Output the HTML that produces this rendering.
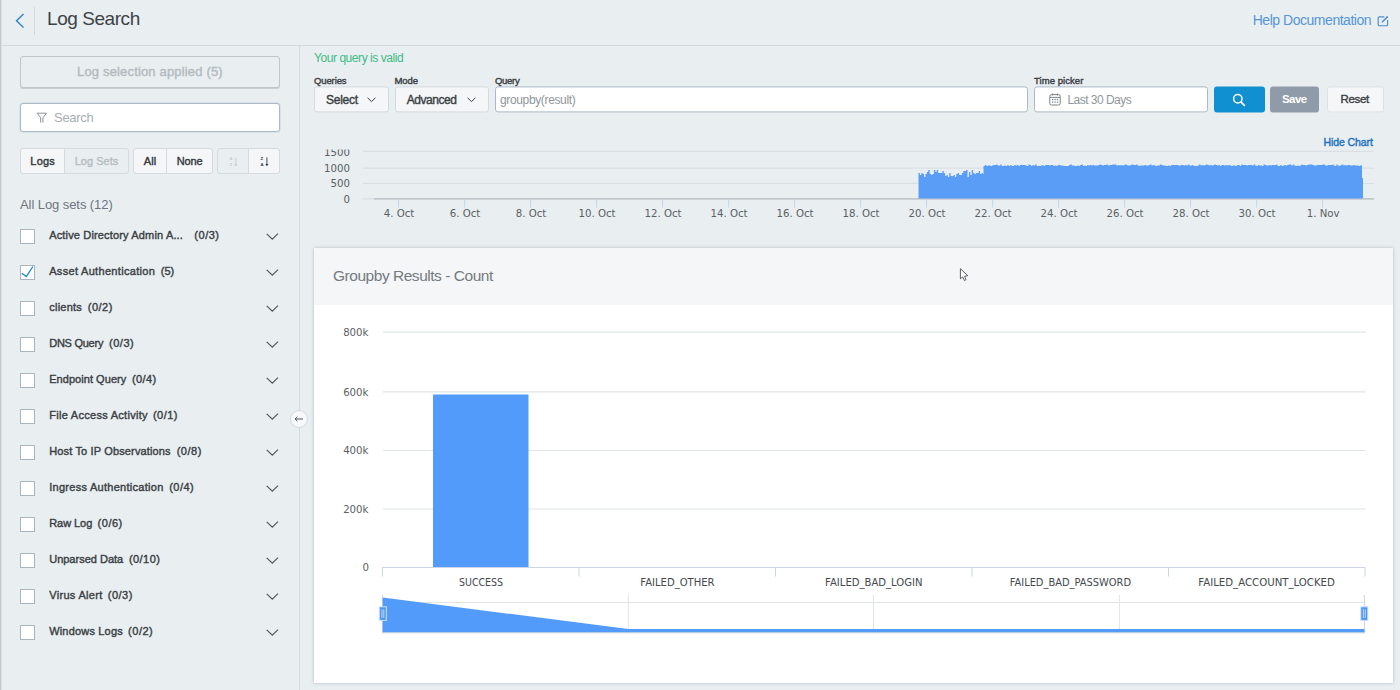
<!DOCTYPE html>
<html><head><meta charset="utf-8"><title>Log Search</title>
<style>
*{box-sizing:border-box;margin:0;padding:0}
html,body{width:1400px;height:690px;overflow:hidden}
body{background:#e9eef1;font-family:"Liberation Sans",sans-serif;color:#30353a;position:relative}
.abs{position:absolute}
.t{position:absolute;white-space:nowrap}
#edge{left:0;top:0;width:1px;height:690px;background:#c3c8cc;box-shadow:1px 0 0 #dde2e5}
#hdr{left:2px;top:0;width:1398px;height:46px;border-bottom:1px solid #d3d9dd}
#hdiv{left:34px;top:7px;width:1px;height:28px;background:#d3d9dd}
#side{left:2px;top:46px;width:298px;height:644px;border-right:1px solid #d3d9dd}
#applied{left:20px;top:56px;width:260px;height:32px;border:1px solid #bfc6cb;border-radius:3px;background:#e9eef1;box-shadow:0 1px 0 #c9ced2}
#search{left:20px;top:103px;width:260px;height:29px;border:1px solid #adbbc6;border-radius:3px;background:#fff;box-shadow:0 0 0 .5px #cdd6dc}
.btn{position:absolute;top:148px;height:26px;border:1px solid #d5dadd;background:#f4f6f7}
.btn.dis{background:#e9eef1}
.cb{position:absolute;left:20px;width:15px;height:15px;border:1px solid #aab5bf;background:#fff;border-radius:.5px}
.dd{transform:translateY(-.6px);position:absolute;top:87px;height:26px;border:1px solid #d5dadd;border-radius:3px;background:#f4f6f7}
.inp{transform:translateY(-.6px);position:absolute;top:87px;height:26px;border:1px solid #a9b9c5;border-radius:3px;background:#fff}
.b2{transform:translateY(-.6px);position:absolute;top:87px;height:26px;border-radius:3px}
#panel{left:314px;top:248px;width:1079px;height:435px;background:#fff;box-shadow:0 0 3px rgba(120,135,145,.5)}
#phead{left:314px;top:248px;width:1079px;height:57px;background:#f4f6f8}
#collapse{left:290px;top:410px;width:18px;height:18px;border-radius:9px;background:#f6f8f9;border:1px solid #d3d9dd}
</style></head><body>
<div id="edge" class="abs"></div><div id="hdr" class="abs"></div>
<svg class="abs" style="left:14px;top:12px" width="12" height="18" viewBox="0 0 12 18"><path d="M9.5 2 L2.5 8.7 L9.5 15.4" fill="none" stroke="#2b82cf" stroke-width="1.4"/></svg>
<div id="hdiv" class="abs"></div>
<svg class="abs" style="left:1377px;top:15px" width="12" height="12" viewBox="0 0 12 12"><path d="M7.3 1.9H2.5a1.3 1.3 0 0 0-1.3 1.3v6.2a1.3 1.3 0 0 0 1.3 1.3h6.8a1.3 1.3 0 0 0 1.3-1.3V5" fill="none" stroke="#4a8fd0" stroke-width="1.15"/><path d="M5 7.3L10.3 2" fill="none" stroke="#3f86cc" stroke-width="1.3"/><circle cx="10.3" cy="2" r=".8" fill="#2f78c4"/></svg>
<div id="side" class="abs"></div><div id="applied" class="abs"></div><div id="search" class="abs"></div>
<svg class="abs" style="left:36px;top:112px" width="12" height="12" viewBox="0 0 12 12"><path d="M1 1.2h9.6L6.9 5.6v5M4.7 10.6v-5L1 1.2" fill="none" stroke="#8a9298" stroke-width="1"/></svg>
<div class="btn" style="left:20px;width:45px;border-radius:3px 0 0 3px"></div>
<div class="btn dis" style="left:64px;width:65px;border-radius:0 3px 3px 0"></div>
<div class="btn" style="left:133px;width:34px;border-radius:3px 0 0 3px"></div>
<div class="btn" style="left:166px;width:47px;border-radius:0 3px 3px 0"></div>
<div class="btn dis" style="left:217px;width:32px;border-radius:3px 0 0 3px"></div>
<div class="btn" style="left:248px;width:32px;border-radius:0 3px 3px 0"></div>
<svg class="abs" style="left:228.6px;top:156px" width="12" height="12" viewBox="0 0 12 12"><text x="0.5" y="4.4" font-size="4.3" font-weight="bold" fill="#c3c9ce" font-family="Liberation Sans">A</text><text x="0.6" y="10.2" font-size="4.3" font-weight="bold" fill="#c3c9ce" font-family="Liberation Sans">Z</text><path d="M6.9 1.6v8.2M5.6 8.2l1.3 1.6 1.3-1.6" fill="none" stroke="#c3c9ce" stroke-width=".9"/></svg>
<svg class="abs" style="left:259.6px;top:156px" width="12" height="12" viewBox="0 0 12 12"><text x="0.6" y="4.4" font-size="4.3" font-weight="bold" fill="#3a3f44" font-family="Liberation Sans">Z</text><text x="0.5" y="10.2" font-size="4.3" font-weight="bold" fill="#3a3f44" font-family="Liberation Sans">A</text><path d="M6.9 1.4v7.6" fill="none" stroke="#4a4f54" stroke-width="1"/><path d="M5.3 7.9h3.2L6.9 10.3Z" fill="#3a3f44"/></svg>
<div class="cb" style="top:229px"></div><svg class="abs" style="left:265px;top:233px" width="14" height="8" viewBox="0 0 14 8"><path d="M1.7 0.8L7.3 6.1L13 0.7" fill="none" stroke="#50555a" stroke-width="1.15"/></svg>
<div class="cb" style="top:265px"><svg style="position:absolute;left:0;top:0" width="13" height="13" viewBox="0 0 13 13"><path d="M0.8 7.2L5.3 10.5L11.9 0.5" fill="none" stroke="#1b8acb" stroke-width="1.35"/></svg></div><svg class="abs" style="left:265px;top:269px" width="14" height="8" viewBox="0 0 14 8"><path d="M1.7 0.8L7.3 6.1L13 0.7" fill="none" stroke="#50555a" stroke-width="1.15"/></svg>
<div class="cb" style="top:301px"></div><svg class="abs" style="left:265px;top:305px" width="14" height="8" viewBox="0 0 14 8"><path d="M1.7 0.8L7.3 6.1L13 0.7" fill="none" stroke="#50555a" stroke-width="1.15"/></svg>
<div class="cb" style="top:337px"></div><svg class="abs" style="left:265px;top:341px" width="14" height="8" viewBox="0 0 14 8"><path d="M1.7 0.8L7.3 6.1L13 0.7" fill="none" stroke="#50555a" stroke-width="1.15"/></svg>
<div class="cb" style="top:373px"></div><svg class="abs" style="left:265px;top:377px" width="14" height="8" viewBox="0 0 14 8"><path d="M1.7 0.8L7.3 6.1L13 0.7" fill="none" stroke="#50555a" stroke-width="1.15"/></svg>
<div class="cb" style="top:409px"></div><svg class="abs" style="left:265px;top:413px" width="14" height="8" viewBox="0 0 14 8"><path d="M1.7 0.8L7.3 6.1L13 0.7" fill="none" stroke="#50555a" stroke-width="1.15"/></svg>
<div class="cb" style="top:445px"></div><svg class="abs" style="left:265px;top:449px" width="14" height="8" viewBox="0 0 14 8"><path d="M1.7 0.8L7.3 6.1L13 0.7" fill="none" stroke="#50555a" stroke-width="1.15"/></svg>
<div class="cb" style="top:481px"></div><svg class="abs" style="left:265px;top:485px" width="14" height="8" viewBox="0 0 14 8"><path d="M1.7 0.8L7.3 6.1L13 0.7" fill="none" stroke="#50555a" stroke-width="1.15"/></svg>
<div class="cb" style="top:517px"></div><svg class="abs" style="left:265px;top:521px" width="14" height="8" viewBox="0 0 14 8"><path d="M1.7 0.8L7.3 6.1L13 0.7" fill="none" stroke="#50555a" stroke-width="1.15"/></svg>
<div class="cb" style="top:553px"></div><svg class="abs" style="left:265px;top:557px" width="14" height="8" viewBox="0 0 14 8"><path d="M1.7 0.8L7.3 6.1L13 0.7" fill="none" stroke="#50555a" stroke-width="1.15"/></svg>
<div class="cb" style="top:589px"></div><svg class="abs" style="left:265px;top:593px" width="14" height="8" viewBox="0 0 14 8"><path d="M1.7 0.8L7.3 6.1L13 0.7" fill="none" stroke="#50555a" stroke-width="1.15"/></svg>
<div class="cb" style="top:625px"></div><svg class="abs" style="left:265px;top:629px" width="14" height="8" viewBox="0 0 14 8"><path d="M1.7 0.8L7.3 6.1L13 0.7" fill="none" stroke="#50555a" stroke-width="1.15"/></svg>
<div class="dd" style="left:314px;width:75px"></div>
<svg class="abs" style="left:367px;top:97px" width="9" height="6" viewBox="0 0 9 6"><path d="M.6.8L4.5 4.6L8.4.8" fill="none" stroke="#3a3f44" stroke-width="1"/></svg>
<div class="dd" style="left:395px;width:94px"></div>
<svg class="abs" style="left:467px;top:97px" width="9" height="6" viewBox="0 0 9 6"><path d="M.6.8L4.5 4.6L8.4.8" fill="none" stroke="#3a3f44" stroke-width="1"/></svg>
<div class="inp" style="left:495px;width:533px"></div>
<div class="inp" style="left:1034px;width:174px"></div>
<svg class="abs" style="left:1049px;top:93px" width="12" height="13" viewBox="0 0 12 13"><rect x=".8" y="1.6" width="10.4" height="10.4" rx="1.6" fill="none" stroke="#7d858b" stroke-width="1"/><path d="M3.4 0.4v2.2M8.6 0.4v2.2M1 4.4h10" stroke="#7d858b" stroke-width="1" fill="none"/><path d="M3 6.7h1.3M5.4 6.7h1.3M7.8 6.7h1.3M3 9.1h1.3M5.4 9.1h1.3M7.8 9.1h1.3" stroke="#7d858b" stroke-width="1.2"/></svg>
<div class="b2" style="left:1214px;width:51px;background:#108fd1"></div>
<svg class="abs" style="left:1232px;top:93px" width="14" height="14" viewBox="0 0 14 14"><circle cx="5.8" cy="5.8" r="4.2" fill="none" stroke="#fff" stroke-width="1.5"/><path d="M8.9 8.9L12.8 12.8" stroke="#fff" stroke-width="1.7"/></svg>
<div class="b2" style="left:1270px;width:49px;background:#8f9ba8"></div>
<div class="b2" style="left:1327px;width:57px;background:#f4f6f7;border:1px solid #dde1e4"></div>
<svg class="abs" style="left:300px;top:140px" width="1100" height="90" viewBox="300 140 1100 90" font-family="'DejaVu Sans','Liberation Sans',sans-serif">
<path d="M363 151.3H1374" stroke="#d6dce1" stroke-width="1"/>
<path d="M363 168.1H1374" stroke="#d6dce1" stroke-width="1"/>
<path d="M363 183.4H1374" stroke="#d6dce1" stroke-width="1"/>
<path d="M363 198.9H1374" stroke="#d6dce1" stroke-width="1"/>
<path d="M374 198.9H1374" stroke="#b9bec3" stroke-width="1.2"/>
<clipPath id="c1"><rect x="300" y="149.4" width="1100" height="90"/></clipPath>
<text x="350" y="155.8" text-anchor="end" font-size="10.2" fill="#5a5f64" clip-path="url(#c1)">1500</text>
<text x="350" y="171.5" text-anchor="end" font-size="10.2" fill="#5a5f64" clip-path="url(#c1)">1000</text>
<text x="350" y="187" text-anchor="end" font-size="10.2" fill="#5a5f64" clip-path="url(#c1)">500</text>
<text x="350" y="202.5" text-anchor="end" font-size="10.2" fill="#5a5f64" clip-path="url(#c1)">0</text>
<path d="M398.6 199.5V207.5" stroke="#c3d3ea" stroke-width="1"/>
<text x="399.1" y="217" text-anchor="middle" font-size="10.2" fill="#5a5f64">4. Oct</text>
<path d="M464.6 199.5V207.5" stroke="#c3d3ea" stroke-width="1"/>
<text x="465.1" y="217" text-anchor="middle" font-size="10.2" fill="#5a5f64">6. Oct</text>
<path d="M530.6 199.5V207.5" stroke="#c3d3ea" stroke-width="1"/>
<text x="531.1" y="217" text-anchor="middle" font-size="10.2" fill="#5a5f64">8. Oct</text>
<path d="M596.6 199.5V207.5" stroke="#c3d3ea" stroke-width="1"/>
<text x="597.1" y="217" text-anchor="middle" font-size="10.2" fill="#5a5f64">10. Oct</text>
<path d="M662.6 199.5V207.5" stroke="#c3d3ea" stroke-width="1"/>
<text x="663.1" y="217" text-anchor="middle" font-size="10.2" fill="#5a5f64">12. Oct</text>
<path d="M728.6 199.5V207.5" stroke="#c3d3ea" stroke-width="1"/>
<text x="729.1" y="217" text-anchor="middle" font-size="10.2" fill="#5a5f64">14. Oct</text>
<path d="M794.6 199.5V207.5" stroke="#c3d3ea" stroke-width="1"/>
<text x="795.1" y="217" text-anchor="middle" font-size="10.2" fill="#5a5f64">16. Oct</text>
<path d="M860.6 199.5V207.5" stroke="#c3d3ea" stroke-width="1"/>
<text x="861.1" y="217" text-anchor="middle" font-size="10.2" fill="#5a5f64">18. Oct</text>
<path d="M926.6 199.5V207.5" stroke="#c3d3ea" stroke-width="1"/>
<text x="927.1" y="217" text-anchor="middle" font-size="10.2" fill="#5a5f64">20. Oct</text>
<path d="M992.6 199.5V207.5" stroke="#c3d3ea" stroke-width="1"/>
<text x="993.1" y="217" text-anchor="middle" font-size="10.2" fill="#5a5f64">22. Oct</text>
<path d="M1058.6 199.5V207.5" stroke="#c3d3ea" stroke-width="1"/>
<text x="1059.1" y="217" text-anchor="middle" font-size="10.2" fill="#5a5f64">24. Oct</text>
<path d="M1124.6 199.5V207.5" stroke="#c3d3ea" stroke-width="1"/>
<text x="1125.1" y="217" text-anchor="middle" font-size="10.2" fill="#5a5f64">26. Oct</text>
<path d="M1190.6 199.5V207.5" stroke="#c3d3ea" stroke-width="1"/>
<text x="1191.1" y="217" text-anchor="middle" font-size="10.2" fill="#5a5f64">28. Oct</text>
<path d="M1256.6 199.5V207.5" stroke="#c3d3ea" stroke-width="1"/>
<text x="1257.1" y="217" text-anchor="middle" font-size="10.2" fill="#5a5f64">30. Oct</text>
<path d="M1322.6 199.5V207.5" stroke="#c3d3ea" stroke-width="1"/>
<text x="1323.1" y="217" text-anchor="middle" font-size="10.2" fill="#5a5f64">1. Nov</text>
<path d="M918.5 198.5 L918.5 173 L919.9 173 L919.9 175 L921.3 175 L921.3 173 L922.7 173 L922.7 174 L924.1 174 L924.1 177 L925.5 177 L925.5 174 L926.9 174 L926.9 172 L928.3 172 L928.3 170 L929.7 170 L929.7 174 L931.1 174 L931.1 175 L932.5 175 L932.5 174 L933.9 174 L933.9 170 L935.3 170 L935.3 172 L936.7 172 L936.7 170 L938.1 170 L938.1 173 L939.5 173 L939.5 173 L940.9 173 L940.9 173 L942.3 173 L942.3 171 L943.7 171 L943.7 173 L945.1 173 L945.1 176 L946.5 176 L946.5 175 L947.9 175 L947.9 177 L949.3 177 L949.3 173 L950.7 173 L950.7 176 L952.1 176 L952.1 176 L953.5 176 L953.5 175 L954.9 175 L954.9 177 L956.3 177 L956.3 174 L957.7 174 L957.7 173 L959.1 173 L959.1 175 L960.5 175 L960.5 175 L961.9 175 L961.9 173 L963.3 173 L963.3 171 L964.7 171 L964.7 171 L966.1 171 L966.1 170 L967.5 170 L967.5 177 L968.9 177 L968.9 172 L970.3 172 L970.3 175 L971.7 175 L971.7 170 L973.1 170 L973.1 173 L974.5 173 L974.5 174 L975.9 174 L975.9 173 L977.3 173 L977.3 173 L978.7 173 L978.7 171 L980.1 171 L980.1 174 L981.5 174 L981.5 173 L982.9 173 L982.9 174 L983.5 174 L983.5 166 L984.9 166 L984.9 165 L986.3 165 L986.3 166 L987.7 166 L987.7 165.5 L989.1 165.5 L989.1 165.5 L990.5 165.5 L990.5 166 L991.9 166 L991.9 165.5 L993.3 165.5 L993.3 165 L994.7 165 L994.7 165 L996.1 165 L996.1 164.5 L997.5 164.5 L997.5 165.5 L998.9 165.5 L998.9 165.5 L1000.3 165.5 L1000.3 164.5 L1001.7 164.5 L1001.7 166 L1003.1 166 L1003.1 166 L1004.5 166 L1004.5 165.5 L1005.9 165.5 L1005.9 166 L1007.3 166 L1007.3 165 L1008.7 165 L1008.7 166 L1010.1 166 L1010.1 165 L1011.5 165 L1011.5 166 L1012.9 166 L1012.9 166 L1014.3 166 L1014.3 165 L1015.7 165 L1015.7 165.5 L1017.1 165.5 L1017.1 165 L1018.5 165 L1018.5 166 L1019.9 166 L1019.9 165 L1021.3 165 L1021.3 165 L1022.7 165 L1022.7 165 L1024.1 165 L1024.1 165 L1025.5 165 L1025.5 165.5 L1026.9 165.5 L1026.9 166 L1028.3 166 L1028.3 164.5 L1029.7 164.5 L1029.7 165 L1031.1 165 L1031.1 166 L1032.5 166 L1032.5 165 L1033.9 165 L1033.9 165.5 L1035.3 165.5 L1035.3 164.5 L1036.7 164.5 L1036.7 166 L1038.1 166 L1038.1 166 L1039.5 166 L1039.5 166 L1040.9 166 L1040.9 165.5 L1042.3 165.5 L1042.3 165 L1043.7 165 L1043.7 166 L1045.1 166 L1045.1 165 L1046.5 165 L1046.5 165 L1047.9 165 L1047.9 165 L1049.3 165 L1049.3 165.5 L1050.7 165.5 L1050.7 165 L1052.1 165 L1052.1 165 L1053.5 165 L1053.5 166 L1054.9 166 L1054.9 165.5 L1056.3 165.5 L1056.3 166 L1057.7 166 L1057.7 165 L1059.1 165 L1059.1 165 L1060.5 165 L1060.5 165.5 L1061.9 165.5 L1061.9 165.5 L1063.3 165.5 L1063.3 166 L1064.7 166 L1064.7 166 L1066.1 166 L1066.1 166 L1067.5 166 L1067.5 166 L1068.9 166 L1068.9 165 L1070.3 165 L1070.3 164.5 L1071.7 164.5 L1071.7 165.5 L1073.1 165.5 L1073.1 165.5 L1074.5 165.5 L1074.5 166 L1075.9 166 L1075.9 166 L1077.3 166 L1077.3 165.5 L1078.7 165.5 L1078.7 166 L1080.1 166 L1080.1 165 L1081.5 165 L1081.5 164.5 L1082.9 164.5 L1082.9 166 L1084.3 166 L1084.3 165.5 L1085.7 165.5 L1085.7 166 L1087.1 166 L1087.1 165 L1088.5 165 L1088.5 165.5 L1089.9 165.5 L1089.9 165 L1091.3 165 L1091.3 165.5 L1092.7 165.5 L1092.7 165 L1094.1 165 L1094.1 165.5 L1095.5 165.5 L1095.5 165.5 L1096.9 165.5 L1096.9 165.5 L1098.3 165.5 L1098.3 165 L1099.7 165 L1099.7 164.5 L1101.1 164.5 L1101.1 165 L1102.5 165 L1102.5 165.5 L1103.9 165.5 L1103.9 165 L1105.3 165 L1105.3 165 L1106.7 165 L1106.7 164.5 L1108.1 164.5 L1108.1 165.5 L1109.5 165.5 L1109.5 165 L1110.9 165 L1110.9 165 L1112.3 165 L1112.3 164.5 L1113.7 164.5 L1113.7 164.5 L1115.1 164.5 L1115.1 164.5 L1116.5 164.5 L1116.5 165.5 L1117.9 165.5 L1117.9 165 L1119.3 165 L1119.3 165.5 L1120.7 165.5 L1120.7 165 L1122.1 165 L1122.1 165.5 L1123.5 165.5 L1123.5 165 L1124.9 165 L1124.9 164.5 L1126.3 164.5 L1126.3 165 L1127.7 165 L1127.7 165.5 L1129.1 165.5 L1129.1 165.5 L1130.5 165.5 L1130.5 165 L1131.9 165 L1131.9 164.5 L1133.3 164.5 L1133.3 165 L1134.7 165 L1134.7 165 L1136.1 165 L1136.1 164.5 L1137.5 164.5 L1137.5 165.5 L1138.9 165.5 L1138.9 166 L1140.3 166 L1140.3 165.5 L1141.7 165.5 L1141.7 165.5 L1143.1 165.5 L1143.1 165.5 L1144.5 165.5 L1144.5 165 L1145.9 165 L1145.9 165.5 L1147.3 165.5 L1147.3 165.5 L1148.7 165.5 L1148.7 165 L1150.1 165 L1150.1 164.5 L1151.5 164.5 L1151.5 165.5 L1152.9 165.5 L1152.9 165 L1154.3 165 L1154.3 165.5 L1155.7 165.5 L1155.7 166 L1157.1 166 L1157.1 165.5 L1158.5 165.5 L1158.5 165.5 L1159.9 165.5 L1159.9 164.5 L1161.3 164.5 L1161.3 165 L1162.7 165 L1162.7 165.5 L1164.1 165.5 L1164.1 165.5 L1165.5 165.5 L1165.5 166 L1166.9 166 L1166.9 166 L1168.3 166 L1168.3 165.5 L1169.7 165.5 L1169.7 166 L1171.1 166 L1171.1 165 L1172.5 165 L1172.5 165 L1173.9 165 L1173.9 165 L1175.3 165 L1175.3 165 L1176.7 165 L1176.7 165 L1178.1 165 L1178.1 165.5 L1179.5 165.5 L1179.5 165.5 L1180.9 165.5 L1180.9 165 L1182.3 165 L1182.3 165 L1183.7 165 L1183.7 165.5 L1185.1 165.5 L1185.1 165 L1186.5 165 L1186.5 165.5 L1187.9 165.5 L1187.9 164.5 L1189.3 164.5 L1189.3 165.5 L1190.7 165.5 L1190.7 165.5 L1192.1 165.5 L1192.1 165 L1193.5 165 L1193.5 166 L1194.9 166 L1194.9 166 L1196.3 166 L1196.3 166 L1197.7 166 L1197.7 165.5 L1199.1 165.5 L1199.1 164.5 L1200.5 164.5 L1200.5 165.5 L1201.9 165.5 L1201.9 165 L1203.3 165 L1203.3 165.5 L1204.7 165.5 L1204.7 165 L1206.1 165 L1206.1 164.5 L1207.5 164.5 L1207.5 165 L1208.9 165 L1208.9 165.5 L1210.3 165.5 L1210.3 165 L1211.7 165 L1211.7 165.5 L1213.1 165.5 L1213.1 165 L1214.5 165 L1214.5 164.5 L1215.9 164.5 L1215.9 165 L1217.3 165 L1217.3 165.5 L1218.7 165.5 L1218.7 165 L1220.1 165 L1220.1 166 L1221.5 166 L1221.5 165 L1222.9 165 L1222.9 165 L1224.3 165 L1224.3 165.5 L1225.7 165.5 L1225.7 165 L1227.1 165 L1227.1 165.5 L1228.5 165.5 L1228.5 165 L1229.9 165 L1229.9 165.5 L1231.3 165.5 L1231.3 166 L1232.7 166 L1232.7 165.5 L1234.1 165.5 L1234.1 165.5 L1235.5 165.5 L1235.5 166 L1236.9 166 L1236.9 165 L1238.3 165 L1238.3 165 L1239.7 165 L1239.7 166 L1241.1 166 L1241.1 164.5 L1242.5 164.5 L1242.5 165 L1243.9 165 L1243.9 165 L1245.3 165 L1245.3 165 L1246.7 165 L1246.7 165.5 L1248.1 165.5 L1248.1 165 L1249.5 165 L1249.5 165 L1250.9 165 L1250.9 165 L1252.3 165 L1252.3 165.5 L1253.7 165.5 L1253.7 164.5 L1255.1 164.5 L1255.1 165.5 L1256.5 165.5 L1256.5 166 L1257.9 166 L1257.9 165 L1259.3 165 L1259.3 165.5 L1260.7 165.5 L1260.7 165.5 L1262.1 165.5 L1262.1 166 L1263.5 166 L1263.5 164.5 L1264.9 164.5 L1264.9 165 L1266.3 165 L1266.3 165.5 L1267.7 165.5 L1267.7 165.5 L1269.1 165.5 L1269.1 165 L1270.5 165 L1270.5 165.5 L1271.9 165.5 L1271.9 165 L1273.3 165 L1273.3 165 L1274.7 165 L1274.7 165 L1276.1 165 L1276.1 164.5 L1277.5 164.5 L1277.5 166 L1278.9 166 L1278.9 166 L1280.3 166 L1280.3 165 L1281.7 165 L1281.7 166 L1283.1 166 L1283.1 165.5 L1284.5 165.5 L1284.5 165 L1285.9 165 L1285.9 165.5 L1287.3 165.5 L1287.3 165 L1288.7 165 L1288.7 164.5 L1290.1 164.5 L1290.1 164.5 L1291.5 164.5 L1291.5 165.5 L1292.9 165.5 L1292.9 164.5 L1294.3 164.5 L1294.3 165.5 L1295.7 165.5 L1295.7 166 L1297.1 166 L1297.1 165.5 L1298.5 165.5 L1298.5 166 L1299.9 166 L1299.9 165.5 L1301.3 165.5 L1301.3 164.5 L1302.7 164.5 L1302.7 165 L1304.1 165 L1304.1 165 L1305.5 165 L1305.5 165.5 L1306.9 165.5 L1306.9 165 L1308.3 165 L1308.3 164.5 L1309.7 164.5 L1309.7 164.5 L1311.1 164.5 L1311.1 164.5 L1312.5 164.5 L1312.5 165 L1313.9 165 L1313.9 165.5 L1315.3 165.5 L1315.3 165.5 L1316.7 165.5 L1316.7 165 L1318.1 165 L1318.1 165 L1319.5 165 L1319.5 165 L1320.9 165 L1320.9 165 L1322.3 165 L1322.3 164.5 L1323.7 164.5 L1323.7 164.5 L1325.1 164.5 L1325.1 165.5 L1326.5 165.5 L1326.5 165.5 L1327.9 165.5 L1327.9 165 L1329.3 165 L1329.3 165 L1330.7 165 L1330.7 165 L1332.1 165 L1332.1 164.5 L1333.5 164.5 L1333.5 165.5 L1334.9 165.5 L1334.9 166 L1336.3 166 L1336.3 164.5 L1337.7 164.5 L1337.7 165.5 L1339.1 165.5 L1339.1 166 L1340.5 166 L1340.5 165 L1341.9 165 L1341.9 164.5 L1343.3 164.5 L1343.3 165.5 L1344.7 165.5 L1344.7 165 L1346.1 165 L1346.1 165.5 L1347.5 165.5 L1347.5 165 L1348.9 165 L1348.9 165 L1350.3 165 L1350.3 165.5 L1351.7 165.5 L1351.7 165.5 L1353.1 165.5 L1353.1 165 L1354.5 165 L1354.5 165.5 L1355.9 165.5 L1355.9 165.5 L1357.3 165.5 L1357.3 165.5 L1358.7 165.5 L1358.7 166 L1360.1 166 L1360.1 165.5 L1361.5 165.5 L1361.5 165 L1362.0 165 L1362 178 L1363 178 L1363 198.5Z" fill="#599df7"/>
</svg>
<div id="panel" class="abs"></div><div id="phead" class="abs"></div>
<div id="collapse" class="abs"></div><svg class="abs" style="left:294px;top:415px" width="10" height="8" viewBox="0 0 10 8"><path d="M1 4H9M3.4 1.8L1 4L3.4 6.2" fill="none" stroke="#555b61" stroke-width="1"/></svg>
<svg class="abs" style="left:314px;top:304px" width="1079" height="379" viewBox="314 304 1079 379" font-family="'DejaVu Sans','Liberation Sans',sans-serif">
<path d="M383 332.2H1365.5" stroke="#e0e5e8" stroke-width="1.2"/>
<text x="368.5" y="335.8" text-anchor="end" font-size="10.2" fill="#5a5f64">800k</text>
<path d="M383 391.9H1365.5" stroke="#e0e5e8" stroke-width="1.2"/>
<text x="368.5" y="395.5" text-anchor="end" font-size="10.2" fill="#5a5f64">600k</text>
<path d="M383 450.5H1365.5" stroke="#e0e5e8" stroke-width="1.2"/>
<text x="368.5" y="454.1" text-anchor="end" font-size="10.2" fill="#5a5f64">400k</text>
<path d="M383 509.0H1365.5" stroke="#e0e5e8" stroke-width="1.2"/>
<text x="368.5" y="512.6" text-anchor="end" font-size="10.2" fill="#5a5f64">200k</text>
<text x="369" y="571.2" text-anchor="end" font-size="10.2" fill="#5a5f64">0</text>
<rect x="433" y="394.5" width="95.5" height="173.5" fill="#529bfb"/>
<path d="M382 567.5H1365" stroke="#cdd6e4" stroke-width="1"/>
<path d="M382.5 567.5V576.5" stroke="#cdd6e4" stroke-width="1"/>
<path d="M579.0 567.5V576.5" stroke="#cdd6e4" stroke-width="1"/>
<path d="M775.5 567.5V576.5" stroke="#cdd6e4" stroke-width="1"/>
<path d="M972.0 567.5V576.5" stroke="#cdd6e4" stroke-width="1"/>
<path d="M1168.5 567.5V576.5" stroke="#cdd6e4" stroke-width="1"/>
<path d="M1365.0 567.5V576.5" stroke="#cdd6e4" stroke-width="1"/>
<text x="459.0" y="585.7" textLength="44.0" lengthAdjust="spacingAndGlyphs" font-size="10.2" fill="#44494e">SUCCESS</text>
<text x="640.3" y="585.7" textLength="74.3" lengthAdjust="spacingAndGlyphs" font-size="10.2" fill="#44494e">FAILED_OTHER</text>
<text x="825.1" y="585.7" textLength="97.5" lengthAdjust="spacingAndGlyphs" font-size="10.2" fill="#44494e">FAILED_BAD_LOGIN</text>
<text x="1009.7" y="585.7" textLength="121.4" lengthAdjust="spacingAndGlyphs" font-size="10.2" fill="#44494e">FAILED_BAD_PASSWORD</text>
<text x="1198.3" y="585.7" textLength="136.6" lengthAdjust="spacingAndGlyphs" font-size="10.2" fill="#44494e">FAILED_ACCOUNT_LOCKED</text>
<path d="M382.5 602.5H1365" stroke="#e1e5e8" stroke-width="1"/>
<path d="M382.5 595V632.5" stroke="#d0d3d6" stroke-width="1"/>
<path d="M628.3 595V632.5" stroke="#e1e5e8" stroke-width="1"/>
<path d="M873.4 595V632.5" stroke="#e1e5e8" stroke-width="1"/>
<path d="M1119.4 595V632.5" stroke="#e1e5e8" stroke-width="1"/>
<path d="M1364.4 595V632.5" stroke="#d0d3d6" stroke-width="1"/>
<path d="M382.7 597.6L628.3 629H1364.5V632.5H382.7Z" fill="#529bfb"/>
<path d="M382 632.8H1365" stroke="#c5ccd6" stroke-width="1"/>
<rect x="379.3" y="606.8" width="7" height="13.6" fill="#4c96f7" stroke="#cfe1fc" stroke-width="1"/><path d="M381.90000000000003 609.3V618M383.8 609.3V618" stroke="#c2dafc" stroke-width="1"/>
<rect x="1360.8" y="606.8" width="7" height="13.6" fill="#4c96f7" stroke="#cfe1fc" stroke-width="1"/><path d="M1363.3999999999999 609.3V618M1365.3 609.3V618" stroke="#c2dafc" stroke-width="1"/>
</svg>
<svg class="abs" style="left:956px;top:264px" width="16" height="20" viewBox="956 264 16 20"><path d="M960.4 268.7V278.8L962.7 276.9L964.4 280.5L966 279.7L964.5 276.2L967.8 275.7Z" fill="#fff" stroke="#4a4e55" stroke-width="0.9" stroke-linejoin="round"/></svg>
<span class="t" id="t0" style="left:47.0px;top:4.92px;font-size:19px;line-height:27px;color:#3d4247;letter-spacing:-0.441px;">Log Search</span>
<span class="t" id="t1" style="left:1252.7px;top:9.85px;font-size:14px;line-height:20px;color:#5596d5;letter-spacing:-0.466px;">Help Documentation</span>
<span class="t" id="t2" style="left:77.0px;top:62.80px;font-size:13px;line-height:18px;color:#b4bbc0;-webkit-text-stroke:0.4px #b4bbc0;letter-spacing:0.165px;">Log selection applied (5)</span>
<span class="t" id="t3" style="left:54.0px;top:108.70px;font-size:13px;line-height:18px;color:#a7aeb3;letter-spacing:-0.273px;">Search</span>
<span class="t" id="t4" style="left:30.3px;top:153.69px;font-size:11px;line-height:15px;color:#34393e;-webkit-text-stroke:0.4px #34393e;letter-spacing:0.240px;">Logs</span>
<span class="t" id="t5" style="left:74.7px;top:153.69px;font-size:11px;line-height:15px;color:#b7bec3;-webkit-text-stroke:0.4px #b7bec3;letter-spacing:0.024px;">Log Sets</span>
<span class="t" id="t6" style="left:143.7px;top:153.69px;font-size:11px;line-height:15px;color:#34393e;-webkit-text-stroke:0.4px #34393e;letter-spacing:0.146px;">All</span>
<span class="t" id="t7" style="left:176.7px;top:153.69px;font-size:11px;line-height:15px;color:#34393e;-webkit-text-stroke:0.4px #34393e;letter-spacing:-0.085px;">None</span>
<span class="t" id="t8" style="left:20.0px;top:195.50px;font-size:13px;line-height:18px;color:#6f767c;letter-spacing:-0.075px;">All Log sets (12)</span>
<span class="t" id="t9" style="left:49.2px;top:227.89px;font-size:11px;line-height:15px;color:#3a3f44;-webkit-text-stroke:0.4px #3a3f44;letter-spacing:0.158px;">Active Directory Admin A...</span>
<span class="t" id="t10" style="left:194.3px;top:227.89px;font-size:11px;line-height:15px;color:#3a3f44;-webkit-text-stroke:0.4px #3a3f44;letter-spacing:0.528px;">(0/3)</span>
<span class="t" id="t11" style="left:49.2px;top:263.89px;font-size:11px;line-height:15px;color:#3a3f44;-webkit-text-stroke:0.4px #3a3f44;letter-spacing:0.313px;">Asset Authentication</span>
<span class="t" id="t12" style="left:160.7px;top:263.89px;font-size:11px;line-height:15px;color:#3a3f44;-webkit-text-stroke:0.4px #3a3f44;letter-spacing:0.059px;">(5)</span>
<span class="t" id="t13" style="left:49.2px;top:299.89px;font-size:11px;line-height:15px;color:#3a3f44;-webkit-text-stroke:0.4px #3a3f44;letter-spacing:0.248px;">clients</span>
<span class="t" id="t14" style="left:87.7px;top:299.89px;font-size:11px;line-height:15px;color:#3a3f44;-webkit-text-stroke:0.4px #3a3f44;letter-spacing:0.528px;">(0/2)</span>
<span class="t" id="t15" style="left:49.2px;top:335.89px;font-size:11px;line-height:15px;color:#3a3f44;-webkit-text-stroke:0.4px #3a3f44;letter-spacing:-0.253px;">DNS Query</span>
<span class="t" id="t16" style="left:109.0px;top:335.89px;font-size:11px;line-height:15px;color:#3a3f44;-webkit-text-stroke:0.4px #3a3f44;letter-spacing:0.528px;">(0/3)</span>
<span class="t" id="t17" style="left:49.2px;top:371.89px;font-size:11px;line-height:15px;color:#3a3f44;-webkit-text-stroke:0.4px #3a3f44;letter-spacing:0.049px;">Endpoint Query</span>
<span class="t" id="t18" style="left:132.0px;top:371.89px;font-size:11px;line-height:15px;color:#3a3f44;-webkit-text-stroke:0.4px #3a3f44;letter-spacing:0.372px;">(0/4)</span>
<span class="t" id="t19" style="left:49.2px;top:407.89px;font-size:11px;line-height:15px;color:#3a3f44;-webkit-text-stroke:0.4px #3a3f44;letter-spacing:0.286px;">File Access Activity</span>
<span class="t" id="t20" style="left:153.0px;top:407.89px;font-size:11px;line-height:15px;color:#3a3f44;-webkit-text-stroke:0.4px #3a3f44;letter-spacing:0.461px;">(0/1)</span>
<span class="t" id="t21" style="left:49.2px;top:443.89px;font-size:11px;line-height:15px;color:#3a3f44;-webkit-text-stroke:0.4px #3a3f44;letter-spacing:0.146px;">Host To IP Observations</span>
<span class="t" id="t22" style="left:176.7px;top:443.89px;font-size:11px;line-height:15px;color:#3a3f44;-webkit-text-stroke:0.4px #3a3f44;letter-spacing:0.506px;">(0/8)</span>
<span class="t" id="t23" style="left:49.2px;top:479.89px;font-size:11px;line-height:15px;color:#3a3f44;-webkit-text-stroke:0.4px #3a3f44;letter-spacing:0.281px;">Ingress Authentication</span>
<span class="t" id="t24" style="left:169.2px;top:479.89px;font-size:11px;line-height:15px;color:#3a3f44;-webkit-text-stroke:0.4px #3a3f44;letter-spacing:0.483px;">(0/4)</span>
<span class="t" id="t25" style="left:49.2px;top:515.89px;font-size:11px;line-height:15px;color:#3a3f44;-webkit-text-stroke:0.4px #3a3f44;letter-spacing:-0.050px;">Raw Log</span>
<span class="t" id="t26" style="left:97.6px;top:515.89px;font-size:11px;line-height:15px;color:#3a3f44;-webkit-text-stroke:0.4px #3a3f44;letter-spacing:0.506px;">(0/6)</span>
<span class="t" id="t27" style="left:49.2px;top:551.89px;font-size:11px;line-height:15px;color:#3a3f44;-webkit-text-stroke:0.4px #3a3f44;letter-spacing:0.000px;">Unparsed Data</span>
<span class="t" id="t28" style="left:128.9px;top:551.89px;font-size:11px;line-height:15px;color:#3a3f44;-webkit-text-stroke:0.4px #3a3f44;letter-spacing:0.445px;">(0/10)</span>
<span class="t" id="t29" style="left:49.2px;top:587.89px;font-size:11px;line-height:15px;color:#3a3f44;-webkit-text-stroke:0.4px #3a3f44;letter-spacing:0.320px;">Virus Alert</span>
<span class="t" id="t30" style="left:107.8px;top:587.89px;font-size:11px;line-height:15px;color:#3a3f44;-webkit-text-stroke:0.4px #3a3f44;letter-spacing:0.483px;">(0/3)</span>
<span class="t" id="t31" style="left:49.2px;top:623.89px;font-size:11px;line-height:15px;color:#3a3f44;-webkit-text-stroke:0.4px #3a3f44;letter-spacing:0.179px;">Windows Logs</span>
<span class="t" id="t32" style="left:128.1px;top:623.89px;font-size:11px;line-height:15px;color:#3a3f44;-webkit-text-stroke:0.4px #3a3f44;letter-spacing:0.506px;">(0/2)</span>
<span class="t" id="t33" style="left:314.0px;top:49.54px;font-size:12px;line-height:17px;color:#3fbb86;letter-spacing:-0.439px;">Your query is valid</span>
<span class="t" id="t34" style="left:314.0px;top:73.71px;font-size:9.5px;line-height:13px;color:#3a3f44;-webkit-text-stroke:0.4px #3a3f44;letter-spacing:-0.118px;">Queries</span>
<span class="t" id="t35" style="left:394.5px;top:73.71px;font-size:9.5px;line-height:13px;color:#3a3f44;-webkit-text-stroke:0.4px #3a3f44;letter-spacing:-0.076px;">Mode</span>
<span class="t" id="t36" style="left:495.0px;top:73.71px;font-size:9.5px;line-height:13px;color:#3a3f44;-webkit-text-stroke:0.4px #3a3f44;letter-spacing:-0.306px;">Query</span>
<span class="t" id="t37" style="left:1034.0px;top:73.71px;font-size:9.5px;line-height:13px;color:#3a3f44;-webkit-text-stroke:0.4px #3a3f44;letter-spacing:0.062px;">Time picker</span>
<span class="t" id="t38" style="left:326.0px;top:91.84px;font-size:12px;line-height:17px;color:#3a3f44;-webkit-text-stroke:0.4px #3a3f44;letter-spacing:-0.247px;">Select</span>
<span class="t" id="t39" style="left:406.7px;top:91.84px;font-size:12px;line-height:17px;color:#3a3f44;-webkit-text-stroke:0.4px #3a3f44;letter-spacing:-0.450px;">Advanced</span>
<span class="t" id="t40" style="left:500.0px;top:91.84px;font-size:12px;line-height:17px;color:#8f969c;letter-spacing:-0.359px;">groupby(result)</span>
<span class="t" id="t41" style="left:1067.4px;top:91.84px;font-size:12px;line-height:17px;color:#8f969c;letter-spacing:-0.526px;">Last 30 Days</span>
<span class="t" id="t42" style="left:1282.0px;top:91.32px;font-size:11.5px;line-height:16px;color:#ffffff;font-weight:bold;letter-spacing:-0.560px;">Save</span>
<span class="t" id="t43" style="left:1340.6px;top:91.32px;font-size:11.5px;line-height:16px;color:#3a3f44;-webkit-text-stroke:0.4px #3a3f44;letter-spacing:-0.344px;">Reset</span>
<span class="t" id="t44" style="left:1323.4px;top:134.86px;font-size:10.5px;line-height:15px;color:#1b72c4;-webkit-text-stroke:0.4px #1b72c4;letter-spacing:-0.074px;">Hide Chart</span>
<span class="t" id="t45" style="left:333.0px;top:265.33px;font-size:15.5px;line-height:22px;color:#747b81;letter-spacing:-0.470px;">Groupby Results - Count</span>
</body></html>
